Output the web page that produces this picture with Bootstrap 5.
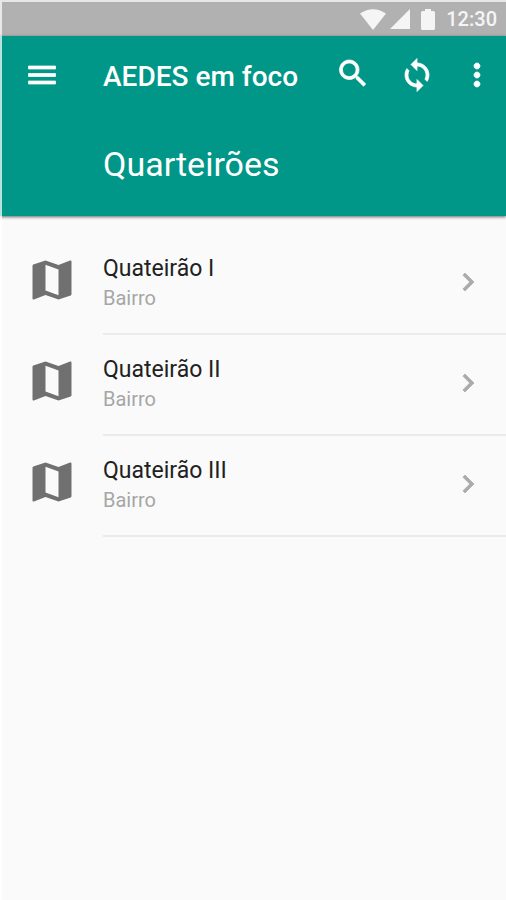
<!DOCTYPE html>
<html lang="pt-BR">
<head>
<meta charset="utf-8">
<meta name="viewport" content="width=device-width, initial-scale=1">
<title>AEDES em foco</title>
<link href="https://cdn.jsdelivr.net/npm/bootstrap@5.3.0/dist/css/bootstrap.min.css" rel="stylesheet">
<style>
body{background:#fafafa;font-family:Roboto,"Liberation Sans",sans-serif;color:#212121}
svg{display:block;fill:currentColor}
.edge{border-left:2px solid rgba(255,255,255,.72)}
.status{height:36px;background:#b1b1b1;color:#f5f5f5;border-top:2px solid #e6e6e6;padding-right:9px;font-size:20px;font-weight:500;line-height:24px}
.app-head{background:#009688;color:#fff;box-shadow:0 1px 3px rgba(0,0,0,.6);height:180px}
.tool{padding:21px 11px 0 22px;height:80px}
.icon-btn{background:none;border:0;padding:0;color:inherit}
.icon-btn svg{stroke:currentColor;stroke-width:.5}
.app-title{font-size:28px;font-weight:500;line-height:36px;margin-left:43px;padding-top:2px}
.page-title{font-size:34px;font-weight:400;line-height:40px;margin:28px 0 0 101px}
.blocks{padding-top:18px}
.block-link{color:inherit}
.lead-icon{width:101px;padding:20px 0 0 24px;color:#707070}
.block-body{border-bottom:2px solid #ebebeb;height:101px;padding:20px 20px 0 0}
.block-name{font-size:23px;line-height:30px;color:#212121}
.block-area{font-size:20px;line-height:28px;color:#a6a6a6}
.chev{color:#ababab;padding-top:10px}
.chev svg{stroke:currentColor;stroke-width:.5}
</style>
<script src="https://cdn.jsdelivr.net/npm/bootstrap@5.3.0/dist/js/bootstrap.bundle.min.js"></script>
</head>
<body class="d-flex flex-column min-vh-100">
<svg class="d-none" aria-hidden="true">
<symbol id="map" viewBox="0 0 24 24"><path d="M20.500 3l-.16.03L15 5.100 9 3 3.360 4.900c-.21.07-.36.25-.36.48V20.500c0 .28.22.5.5.5l.16-.03L9 18.900l6 2.100 5.640-1.900c.21-.07.36-.25.36-.48V3.500c0-.28-.22-.5-.5-.5zM15 19l-6-2.110V5l6 2.110V19z"/></symbol>
<symbol id="chevron" viewBox="0 0 24 24"><path d="M10 6L8.590 7.410 13.170 12l-4.580 4.590L10 18l6-6z"/></symbol>
</svg>
<div class="status edge d-flex align-items-center justify-content-end">
<svg width="26" height="21" viewBox="0 0 26 21" aria-hidden="true"><path d="M13 21L0 4.500Q13-4 26 4.500z"/></svg>
<svg class="ms-1" width="20" height="20" viewBox="0 0 20 20" aria-hidden="true"><path d="M20 0v20H0z"/></svg>
<svg class="ms-2 me-2" width="20" height="21" viewBox="0 0 14 21" aria-hidden="true"><path d="M4 0h6v2h2.500q1.500 0 1.500 1.500v16q0 1.500-1.500 1.500h-11Q0 21 0 19.500v-16Q0 2 1.500 2H4z"/></svg>
<span>12:30</span>
</div>
<header class="app-head edge">
<nav class="tool d-flex align-items-start">
<button class="icon-btn" type="button" aria-label="Menu"><svg width="36" height="36" viewBox="0 0 24 24"><path d="M3 18h18v-2H3v2zm0-5h18v-2H3v2zm0-7v2h18V6H3z"/></svg></button>
<div class="app-title text-nowrap">AEDES em foco</div>
<button class="icon-btn ms-auto" type="button" aria-label="Buscar"><svg width="36" height="36" viewBox="0 1 24 24"><path d="M15.500 14h-.79l-.28-.27C15.410 12.590 16 11.110 16 9.500 16 5.910 13.090 3 9.500 3S3 5.910 3 9.500 5.910 16 9.500 16c1.610 0 3.090-.59 4.230-1.570l.27.28v.79l5 4.990L20.490 19l-4.990-5zm-6 0C7.010 14 5 11.990 5 9.500S7.010 5 9.500 5 14 7.010 14 9.500 11.990 14 9.500 14z"/></svg></button>
<button class="icon-btn ms-4 ps-1" type="button" aria-label="Sincronizar"><svg width="36" height="36" viewBox="0 0 24 24"><path d="M12 4V1L8 5l4 4V6c3.310 0 6 2.690 6 6 0 1.010-.25 1.970-.7 2.800l1.460 1.460C19.540 15.030 20 13.570 20 12c0-4.420-3.580-8-8-8zm0 14c-3.310 0-6-2.690-6-6 0-1.010.25-1.970.7-2.800L5.240 7.740C4.460 8.970 4 10.430 4 12c0 4.420 3.580 8 8 8v3l4-4-4-4v3z"/></svg></button>
<button class="icon-btn ms-4" type="button" aria-label="Mais opções"><svg width="36" height="36" viewBox="0 0 24 24"><path d="M12 8c1.100 0 2-.9 2-2s-.9-2-2-2-2 .9-2 2 .9 2 2 2zm0 2c-1.100 0-2 .9-2 2s.9 2 2 2 2-.9 2-2-.9-2-2-2zm0 6c-1.100 0-2 .9-2 2s.9 2 2 2 2-.9 2-2-.9-2-2-2z"/></svg></button>
</nav>
<h1 class="page-title">Quarteirões</h1>
</header>
<main class="edge flex-grow-1">
<ul class="blocks list-unstyled mb-0">
<li><a href="#q1" class="block-link d-flex text-decoration-none">
<div class="lead-icon flex-shrink-0"><svg width="52" height="52"><use href="#map"/></svg></div>
<div class="block-body flex-grow-1 d-flex justify-content-between"><div><div class="block-name">Quateirão I</div><div class="block-area">Bairro</div></div><div class="chev"><svg width="36" height="36"><use href="#chevron"/></svg></div></div></a></li>
<li><a href="#q2" class="block-link d-flex text-decoration-none">
<div class="lead-icon flex-shrink-0"><svg width="52" height="52"><use href="#map"/></svg></div>
<div class="block-body flex-grow-1 d-flex justify-content-between"><div><div class="block-name">Quateirão II</div><div class="block-area">Bairro</div></div><div class="chev"><svg width="36" height="36"><use href="#chevron"/></svg></div></div></a></li>
<li><a href="#q3" class="block-link d-flex text-decoration-none">
<div class="lead-icon flex-shrink-0"><svg width="52" height="52"><use href="#map"/></svg></div>
<div class="block-body flex-grow-1 d-flex justify-content-between"><div><div class="block-name">Quateirão III</div><div class="block-area">Bairro</div></div><div class="chev"><svg width="36" height="36"><use href="#chevron"/></svg></div></div></a></li>
</ul>
</main>
</body>
</html>
